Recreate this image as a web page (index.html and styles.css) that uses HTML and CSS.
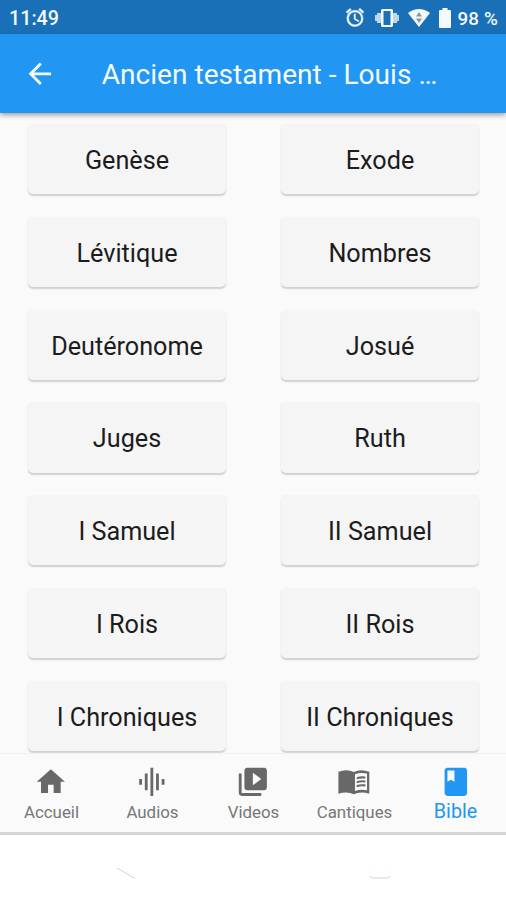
FILE: index.html
```html
<!DOCTYPE html>
<html lang="fr">
<head>
<meta charset="utf-8">
<title>Ancien testament</title>
<link rel="stylesheet" href="styles.css">
</head>
<body>
<div class="screen">
  <div class="status">
    <span class="time">11:49</span>
    <svg class="alarm" viewBox="2 2 20 20"><path d="M22 5.700l-4.600-3.900-1.300 1.500 4.600 3.900L22 5.700zM7.900 3.400L6.600 1.900 2 5.700l1.300 1.500 4.600-3.800zM12.500 8H11v6l4.750 2.850.750-1.230-4-2.370V8zM12 4c-4.970 0-9 4.030-9 9s4.020 9 9 9a9 9 0 000-18zm0 16c-3.870 0-7-3.130-7-7s3.130-7 7-7 7 3.130 7 7-3.130 7-7 7z"/></svg>
    <svg class="vibrate" viewBox="0 2 24 20"><path opacity=".75" d="M0 15h2V9H0v6zm2 2h4V7H2v10zm20-8v6h2V9h-2zm-4 8h4V7h-4v10z"/><path d="M16.500 3h-9C6.670 3 6 3.670 6 4.500v15c0 .83.67 1.500 1.500 1.500h9c.83 0 1.500-.67 1.500-1.500v-15c0-.83-.67-1.500-1.500-1.500zM15.500 19h-7V5h7v14z"/></svg>
    <svg class="wifi" viewBox="0 0 22 18"><path d="M0 4Q11-4 22 4L11 18z"/><path class="traffic" d="M11 3l3 4.500H8zM8 9.500h6L11 14z"/></svg>
    <svg class="battery" viewBox="0 0 12 20"><path d="M3.500 0h5v2H11q1 0 1 1v16q0 1-1 1H1q-1 0-1-1V3q0-1 1-1h2.500z"/></svg>
    <span class="percent">98 %</span>
  </div>
  <header class="appbar">
    <svg class="back" viewBox="0 0 24 24"><path d="M20 11H7.830l5.590-5.590L12 4l-8 8 8 8 1.410-1.410L7.830 13H20v-2z"/></svg>
    <h1>Ancien testament - Louis …</h1>
  </header>
  <main class="books">
    <button><span>Genèse</span></button><button><span>Exode</span></button>
    <button><span>Lévitique</span></button><button><span>Nombres</span></button>
    <button><span>Deutéronome</span></button><button><span>Josué</span></button>
    <button><span>Juges</span></button><button><span>Ruth</span></button>
    <button><span>I Samuel</span></button><button><span>II Samuel</span></button>
    <button><span>I Rois</span></button><button><span>II Rois</span></button>
    <button><span>I Chroniques</span></button><button><span>II Chroniques</span></button>
  </main>
  <nav class="tabs">
    <a><svg viewBox="0 0 24 24"><path d="M10 20v-6h4v6h5v-8h3L12 3 2 12h3v8z"/></svg><span>Accueil</span></a>
    <a><svg viewBox="0 0 24 24"><path d="M7 18h2V6H7v12zm4 4h2V2h-2v20zm-8-8h2v-4H3v4zm12 4h2V6h-2v12zm4-8v4h2v-4h-2z"/></svg><span>Audios</span></a>
    <a><svg viewBox="0 0 24 24"><path d="M4 6H2v14c0 1.100.9 2 2 2h14v-2H4V6zm16-4H8c-1.100 0-2 .9-2 2v12c0 1.100.9 2 2 2h12c1.100 0 2-.9 2-2V4c0-1.100-.9-2-2-2zm-8 12.500v-9l6 4.500-6 4.500z"/></svg><span>Videos</span></a>
    <a><svg viewBox="0 0 24 24"><path fill-rule="evenodd" d="M1 4.800Q7 2.500 12 4.900Q17 2.500 23 4.800V20.500Q17 18.400 12 20.800Q7 18.400 1 20.500ZM12.800 6.600V18.600Q16.500 17 21.400 18V6Q16.500 5 12.800 6.600Z"/><path d="M14 8.700q3-1 6.200-.5v1.500q-3.200-.5-6.200.5zM14 11.500q3-1 6.200-.5v1.500q-3.200-.5-6.200.5zM14 14.300q3-1 6.200-.5v1.500q-3.200-.5-6.200.5z"/></svg><span>Cantiques</span></a>
    <a class="active"><svg viewBox="0 0 24 24"><path d="M18 2H6c-1.100 0-2 .9-2 2v16c0 1.100.9 2 2 2h12c1.100 0 2-.9 2-2V4c0-1.100-.9-2-2-2zM6 4h5v8l-2.500-1.500L6 12V4z"/></svg><span>Bible</span></a>
  </nav>
  <footer class="system">
    <svg viewBox="0 0 20 14"><path d="M1 1l12 7q3 2.500 6 3"/></svg>
    <svg viewBox="0 0 24 20"><path class="faint" d="M2 2v14M22 2v14"/><path d="M2 16q0 2 2 2h16q2 0 2-2"/></svg>
  </footer>
</div>
</body>
</html>
```

FILE: styles.css
```css
* { box-sizing: border-box; }
body { margin: 0; font-family: Roboto, "Liberation Sans", sans-serif; background: #fff; }
svg { display: block; flex: none; fill: currentColor; }
.screen { width: 506px; height: 900px; display: flex; flex-direction: column; overflow: hidden; }
.status { flex: none; height: 34px; display: flex; align-items: center; padding: 1px 8px 0 9px; background: #1a70b7; color: #f4f9ff; font-size: 18.800px; font-weight: 500; }
.time { margin-right: auto; padding-top: 2px; font-size: 19.700px; }
.percent { padding-top: 2px; letter-spacing: .15px; }
.alarm { width: 18px; height: 19px; margin-right: 11px; stroke: currentColor; stroke-width: .5; }
.vibrate { width: 24px; height: 20px; margin-right: 9px; }
.wifi { width: 22px; height: 18px; margin-right: 9px; }
.traffic { fill: #8b969e; }
.battery { width: 12px; height: 20px; margin-right: 7px; }
.appbar { flex: none; height: 79px; display: flex; align-items: center; padding-left: 23px; background: #2196f3; color: #f4faff; box-shadow: 0 2px 5px rgba(0,0,0,.38); position: relative; z-index: 1; }
.back { width: 33.700px; height: 33.700px; }
h1 { margin: 2px 0 0 45px; font-size: 28.100px; font-weight: 400; white-space: nowrap; }
.books { flex: none; height: 640px; padding: 11px 27px 0 28px; display: grid; grid-template-columns: 198px 198px; grid-auto-rows: 70.300px; justify-content: space-between; row-gap: 22.500px; align-content: start; background: #fafafa; overflow: hidden; }
button { border: 0; border-radius: 5px; padding: 2.600px 0 0; background: #f5f5f5; color: #1c1c1c; font: 400 25.200px Roboto, "Liberation Sans", sans-serif; box-shadow: 0 1.500px 1.500px rgba(0,0,0,.17), 0 0 1px rgba(0,0,0,.03); white-space: nowrap; }
.tabs { flex: none; height: 82px; padding-left: 1px; display: grid; grid-template-columns: repeat(5, 1fr); background: #fafafa; color: #686868; border-top: 1px solid #f1f1f1; border-bottom: 3px solid #d6d6d6; }
.tabs a { display: flex; flex-direction: column; align-items: center; padding-top: 11px; font-size: 16.870px; line-height: 20px; }
.tabs svg { width: 33.700px; height: 33.700px; margin-left: -1px; }
.tabs span { margin-top: 3px; color: #777; }
.tabs .active { color: #2196f3; font-size: 19.700px; }
.tabs .active svg { margin-left: 0; }
.tabs .active span { margin-top: 3px; color: inherit; }
.system { flex: 1; display: flex; justify-content: space-between; padding: 32px 114px 0 116px; background: #fff; }
.system svg { width: 20px; height: 14px; fill: none; stroke: #d2d2d2; }
.system svg:last-child { width: 24px; height: 20px; margin-top: -7px; }
.system .faint { stroke: #fcfcfc; }
```
